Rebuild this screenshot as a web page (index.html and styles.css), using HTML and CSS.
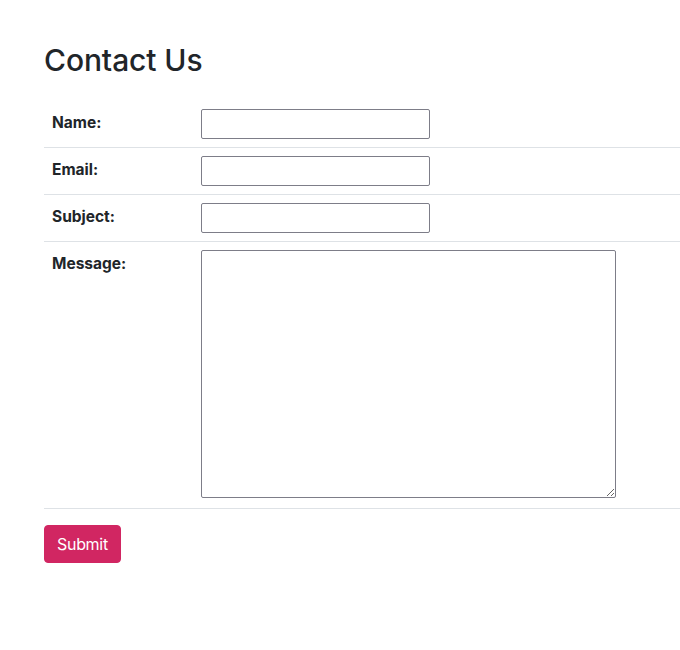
FILE: index.html
```html
<!DOCTYPE html>
<html>
<head>
<meta charset="utf-8">
<link rel="stylesheet" href="styles.css">
</head>
<body>
<div class="page">
  <h2 class="title">Contact Us</h2>
  <form class="contact">
    <table class="form-table">
      <tr>
        <th class="label">Name:</th>
        <td><input class="field" type="text"></td>
      </tr>
      <tr>
        <th class="label">Email:</th>
        <td><input class="field" type="email"></td>
      </tr>
      <tr>
        <th class="label">Subject:</th>
        <td><input class="field" type="text"></td>
      </tr>
      <tr>
        <th class="label">Message:</th>
        <td><textarea class="area"></textarea></td>
      </tr>
    </table>
    <button class="submit" type="button">Submit</button>
  </form>
</div>
</body>
</html>
```

FILE: styles.css
```css
html, body {
  margin: 0;
  padding: 0;
  background: #fff;
  overflow: hidden;
}
body {
  font-family: Inter, "Liberation Sans", sans-serif;
  color: #212529;
  font-size: 16px;
  line-height: 1.5;
}
.page {
  padding-left: 44px;
}
.title {
  font-size: 30px;
  font-weight: 500;
  line-height: 36px;
  margin: 42px 0 23px;
  letter-spacing: -0.1px;
}
.form-table {
  width: 100%;
  border-collapse: collapse;
}
.form-table th,
.form-table td {
  padding: 8px;
  vertical-align: top;
  border-bottom: 1px solid #dee2e6;
  text-align: left;
}
.label {
  width: 133px;
  font-weight: 700;
  font-size: 15.5px;
  line-height: 28px;
}
.field,
.area {
  display: block;
  box-sizing: border-box;
  border: 1px solid #7d7d88;
  border-radius: 2px;
  font-family: inherit;
  margin: 0;
  padding: 2px 4px;
}
.field {
  width: 229px;
  height: 30px;
}
.area {
  width: 415px;
  height: 248px;
  margin-bottom: 2px;
}
.submit {
  display: block;
  margin-top: 16px;
  background: #d12662;
  color: #fff;
  border: 1px solid #d12662;
  border-radius: 4px;
  padding: 6px 12px;
  font-family: inherit;
  font-size: 16px;
  line-height: 24px;
  height: 38px;
  letter-spacing: -0.3px;
}
```
